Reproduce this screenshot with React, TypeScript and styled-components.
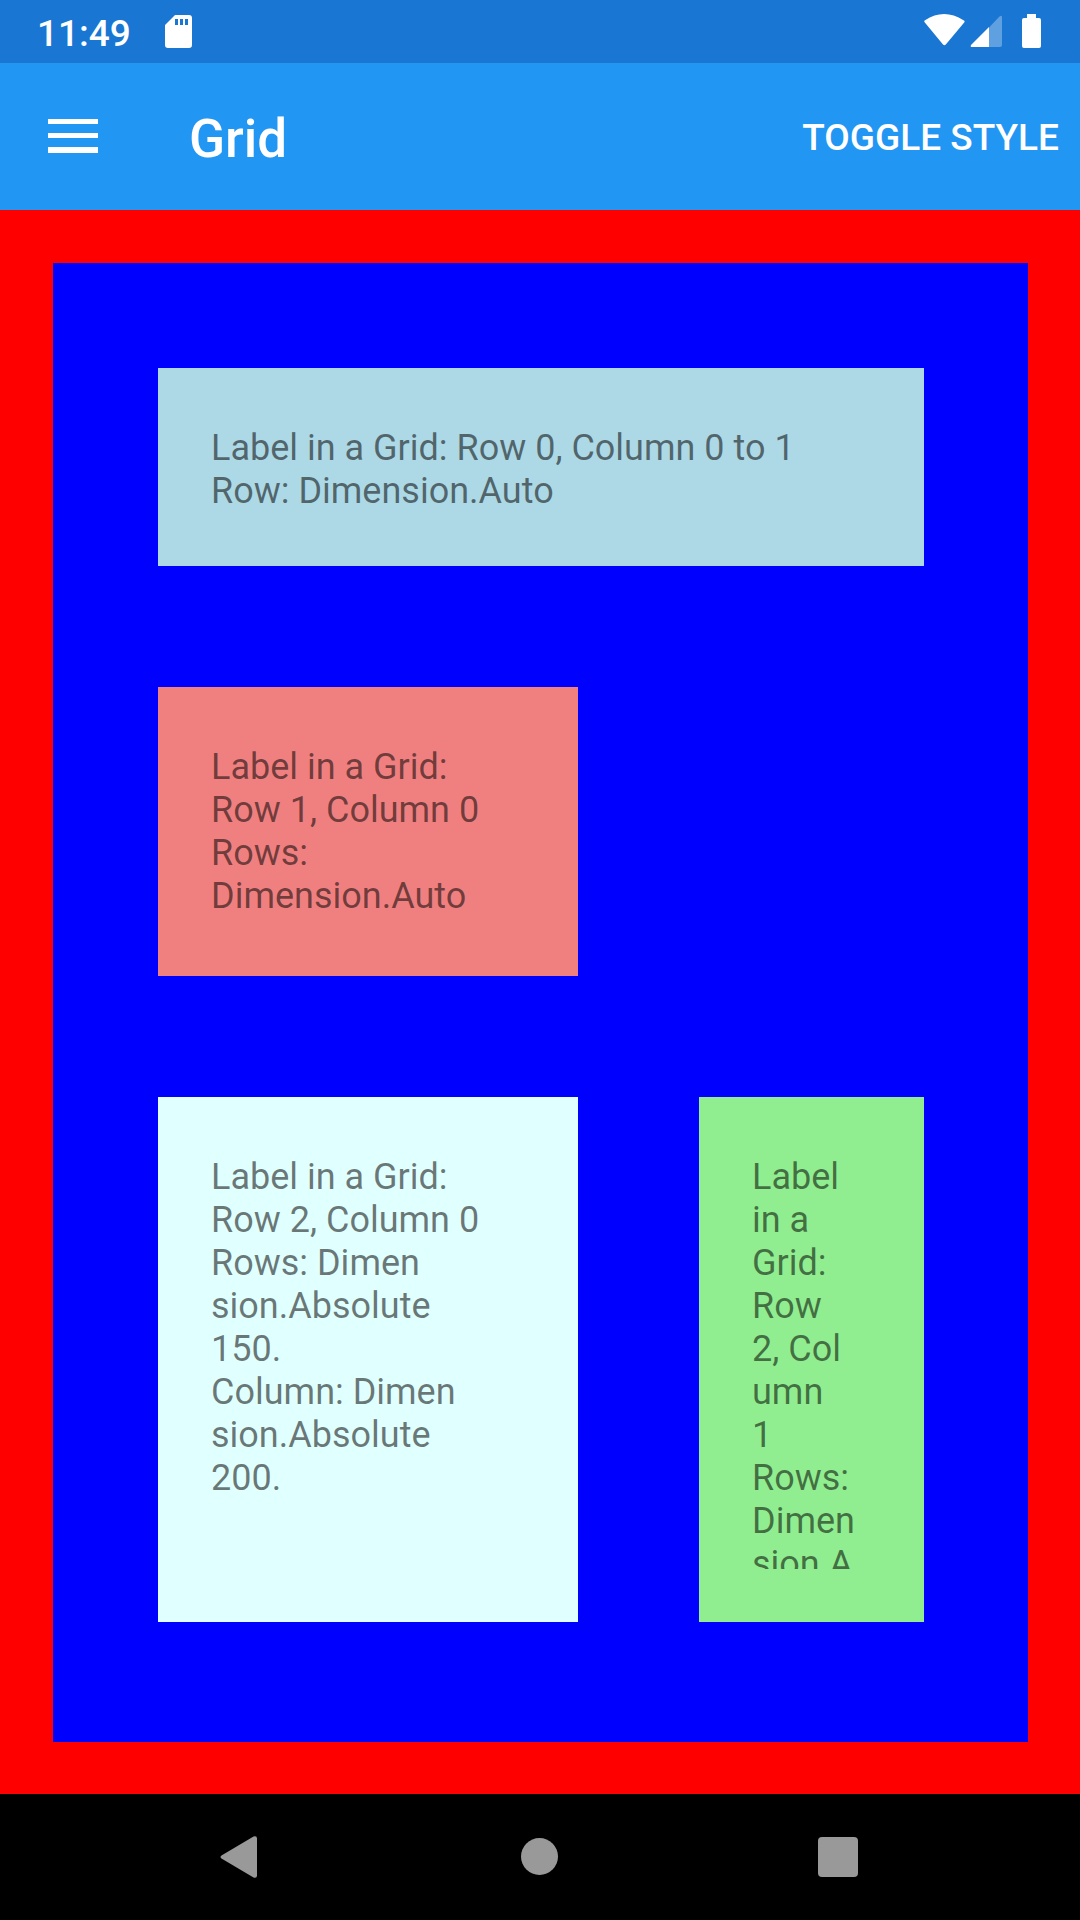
import React, { useState } from "react";
import styled, { createGlobalStyle } from "styled-components";

const GlobalStyle = createGlobalStyle`
  * { box-sizing: border-box; }
  body { margin: 0; background: #000; font-family: Roboto, "Noto Sans", sans-serif; }
`;

const Screen = styled.div`
  display: flex;
  flex-direction: column;
  min-height: 100vh;
`;

const StatusBar = styled.div`
  display: flex;
  justify-content: space-between;
  height: 63px;
  padding: 0 39px 0 37px;
  background: #1976d2;
  color: #fff;
`;

const StatusGroup = styled.div`
  display: flex;
  align-items: center;
  gap: 34px;
`;

const Clock = styled.time`
  font-size: 37px;
  font-weight: 500;
  line-height: 43px;
  padding-top: 4px;
`;

const Icon = styled.svg`
  display: block;
  flex: none;
`;

const AppBar = styled.header`
  display: flex;
  align-items: center;
  height: 147px;
  padding: 0 21px 0 0;
  background: #2196f3;
  color: #fff;
`;

const BareButton = styled.button`
  display: flex;
  align-items: center;
  justify-content: center;
  height: 100%;
  padding: 0;
  border: 0;
  background: none;
  color: inherit;
  font: inherit;
`;

const MenuButton = styled(BareButton)`
  width: 146px;
`;

const Title = styled.h1`
  flex: 1;
  margin: 0;
  padding: 4px 0 0 43px;
  font-size: 53px;
  font-weight: 500;
  line-height: 62px;
`;

const ToolbarAction = styled(BareButton)`
  padding-top: 2px;
  font-size: 37px;
  font-weight: 500;
  line-height: 43px;
`;

const Content = styled.main`
  display: flex;
  flex: 1;
  padding: 53px 52px 52px 53px;
  background: #f00;
`;

const Grid = styled.section<{ $plain: boolean }>`
  flex: 1;
  display: grid;
  grid-template-columns: 420px minmax(0, 1fr);
  grid-template-rows: minmax(198px, auto) minmax(289px, auto) 525px;
  align-content: start;
  gap: 121px;
  padding: 105px 104px 120px 105px;
  background: ${({ $plain }) => ($plain ? "#fff" : "#00f")};
`;

const Cell = styled.div<{ $color: string; $span?: number }>`
  grid-column: ${({ $span }) => ($span ? `1 / span ${$span}` : "auto")};
  min-height: 0;
  padding: 59px 53px 53px;
  background: ${({ $color }) => $color};
`;

const Label = styled.p`
  height: 100%;
  margin: 0;
  overflow: hidden;
  color: rgba(0, 0, 0, 0.54);
  font-size: 36px;
  line-height: 43px;
  white-space: pre;
`;

const EmptyCell = styled.div``;

const NavBar = styled.nav`
  display: flex;
  justify-content: center;
  height: 126px;
  background: #000;
  color: #999;
`;

const NavButton = styled(BareButton)`
  flex: 0 1 298px;
`;

const topText = ["Label in a Grid: Row 0, Column 0 to 1", "Row: Dimension.Auto"].join("\n");

const middleText = ["Label in a Grid:", "Row 1, Column 0", "Rows:", "Dimension.Auto"].join("\n");

const absoluteText = [
  "Label in a Grid:",
  "Row 2, Column 0",
  "Rows: Dimen",
  "sion.Absolute",
  "150.",
  "Column: Dimen",
  "sion.Absolute",
  "200.",
].join("\n");

const narrowText = [
  "Label",
  "in a",
  "Grid:",
  "Row",
  "2, Col",
  "umn",
  "1",
  "Rows:",
  "Dimen",
  "sion.A",
].join("\n");

export default function App() {
  const [plain, setPlain] = useState(false);

  return (
    <Screen>
      <GlobalStyle />
      <StatusBar>
        <StatusGroup>
          <Clock>11:49</Clock>
          <Icon width="27" height="33" viewBox="0 0 27 33" fill="#fff">
            <path
              fillRule="evenodd"
              d="M10 0H24Q27 0 27 3V30Q27 33 24 33H3Q0 33 0 30V10ZM10 4V10H13V4ZM15 4V10H18V4ZM20 4V10H23V4Z"
            />
          </Icon>
        </StatusGroup>
        <StatusGroup>
          <Icon width="117" height="35" viewBox="0 0 117 35" fill="#fff">
            <path d="M0.800 8.500Q-0.500 7.200 1 6.200Q20 -6 39.500 6.200Q41.500 7.200 40 8.800L21.800 30.500Q20.500 32 19 30.500Z" />
            <path
              d="M65 13.500L75 3Q78 0.500 78 3.500V31Q78 33 76 33H65Z"
              fill="#5fa0e0"
            />
            <path d="M65 13V33H48Q46 33 47 31Z" />
            <path d="M103 0H112V4H115Q117 4 117 6V32Q117 34 115 34H100Q98 34 98 32V6Q98 4 100 4H103Z" />
          </Icon>
        </StatusGroup>
      </StatusBar>

      <AppBar>
        <MenuButton type="button" aria-label="Open menu">
          <Icon width="50" height="37" viewBox="0 0 50 37" fill="#fff">
            <rect y="1" width="50" height="5" />
            <rect y="15" width="50" height="5" />
            <rect y="29" width="50" height="6" />
          </Icon>
        </MenuButton>
        <Title>Grid</Title>
        <ToolbarAction type="button" onClick={() => setPlain(!plain)}>
          TOGGLE STYLE
        </ToolbarAction>
      </AppBar>

      <Content>
        <Grid $plain={plain}>
          <Cell $color="#add8e6" $span={2}>
            <Label>{topText}</Label>
          </Cell>
          <Cell $color="#f08080">
            <Label>{middleText}</Label>
          </Cell>
          <EmptyCell />
          <Cell $color="#e0ffff">
            <Label>{absoluteText}</Label>
          </Cell>
          <Cell $color="#90ee90">
            <Label>{narrowText}</Label>
          </Cell>
        </Grid>
      </Content>

      <NavBar>
        <NavButton type="button" aria-label="Back">
          <Icon width="44" height="42" viewBox="0 0 44 42" fill="currentColor">
            <path d="M1.500 19.500L33.500 0.400Q37 -0.600 37 2.500V39.500Q37 42.600 33.500 41.600L1.500 22.500Q-0.500 21 1.500 19.500Z" />
          </Icon>
        </NavButton>
        <NavButton type="button" aria-label="Home">
          <Icon width="38" height="38" viewBox="0 0 38 38" fill="currentColor">
            <circle cx="18.500" cy="18.500" r="18.500" />
          </Icon>
        </NavButton>
        <NavButton type="button" aria-label="Recent apps">
          <Icon width="40" height="40" viewBox="0 0 40 40" fill="currentColor">
            <rect width="40" height="40" rx="4" />
          </Icon>
        </NavButton>
      </NavBar>
    </Screen>
  );
}
